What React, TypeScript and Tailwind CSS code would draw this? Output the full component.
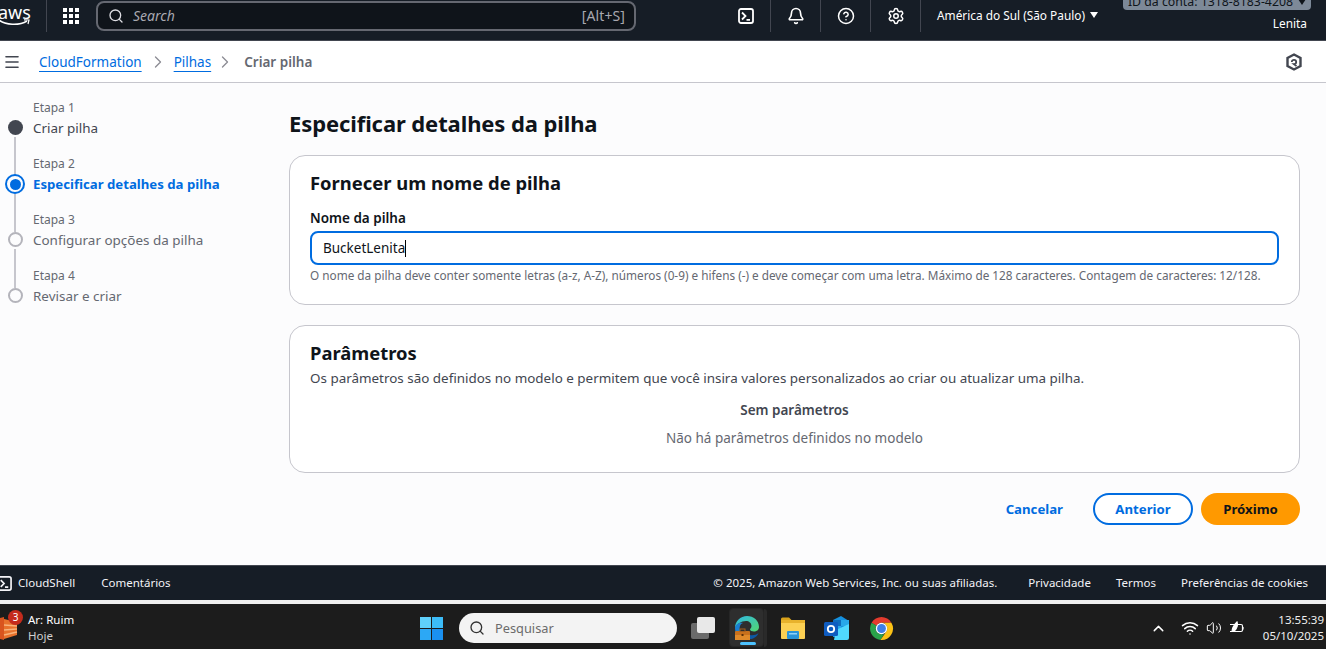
import React from "react";
import { Search, Menu, ChevronRight, Bell, CircleHelp, Settings, ChevronUp, Wifi, Volume2 } from "lucide-react";

const TerminalIcon = ({ size = 16 }: { size?: number }) => (
  <svg width={size} height={size} viewBox="0 0 16 16" fill="none" stroke="currentColor" strokeWidth="1.8">
    <rect x="1" y="1" width="14" height="14" rx="2" />
    <path d="M4 4.500 7.500 8 4 11.500M8.500 11.800h3.500" />
  </svg>
);

const Divider = () => <div className="w-px h-[32px] bg-[#424650]" />;

const Step = ({ n, label, state, last }: { n: number; label: string; state: "done" | "current" | "todo"; last?: boolean }) => (
  <div className="flex h-[56px]">
    <div className="w-[33px] shrink-0 flex flex-col items-center pr-[3px]">
      <div className="h-[18px]" />
      {state === "done" && <div className="w-[15px] h-[15px] mt-[3px] rounded-full bg-[#424650] shrink-0" />}
      {state === "current" && (
        <div className="w-[20px] h-[20px] mt-[1px] -mb-[2px] rounded-full border-2 border-[#006ce0] flex items-center justify-center shrink-0">
          <div className="w-[11px] h-[11px] rounded-full bg-[#006ce0]" />
        </div>
      )}
      {state === "todo" && <div className="w-[15px] h-[15px] mt-[3px] rounded-full border-2 border-[#b4b4bb] shrink-0" />}
      {!last && <div className="w-[2px] flex-1 mt-[2px] -mb-[21px] bg-[#c6c6cd]" />}
    </div>
    <div className="-mt-[1px]">
      <div className="text-[12px] leading-[20px] h-[18px] text-[#656871]">Etapa {n}</div>
      <div
        className={
          "leading-[24px] whitespace-nowrap " +
          (state === "current"
            ? "text-[13.2px] font-bold text-[#006ce0]"
            : state === "done"
            ? "text-[13.45px] text-[#424650]"
            : "text-[13.45px] text-[#656871]")
        }
      >
        {label}
      </div>
    </div>
  </div>
);

const EdgeIcon = () => (
  <svg width="26" height="26" viewBox="0 0 26 26">
    <defs>
      <linearGradient id="eg1" x1="0" y1="0" x2="1" y2="1">
        <stop offset="0" stopColor="#2fb8e6" />
        <stop offset="1" stopColor="#52d86e" />
      </linearGradient>
    </defs>
    <path d="M1 13C1 6 6.500 1 13 1c6.500 0 12 4.500 12 11 0 3-2.500 4.500-5 4.500-2 0-4-1-4-2 0-1 1.500-1.500 1.500-3.500 0-3-2.500-5-5.500-5C7 6 3 9 1 13Z" fill="url(#eg1)" />
    <path d="M1 13c0-3 4-6 8-5-3 1-4 4-3 8 1 4 5 8 10 8-1 .8-2 1-3 1C6 25 1 20 1 13Z" fill="#1a7fd1" />
    <path d="M16 24c3 0 7-2 8.500-6-2 2-6 2.500-8.500 2-2-.4-4-2-5-4 0 4 2 8 5 8Z" fill="#0c59a4" />
    <rect x="1" y="16" width="15" height="9" rx="1" fill="#c8701c" />
    <rect x="1" y="20" width="15" height="5" fill="#e08a2a" />
    <rect x="6" y="14" width="5" height="2.500" fill="none" stroke="#a8601c" strokeWidth="1" />
    <rect x="7.500" y="19" width="2" height="2" fill="#5a2f08" />
  </svg>
);

const FolderIcon = () => (
  <svg width="26" height="24" viewBox="0 0 26 24">
    <path d="M1 3a1.500 1.500 0 0 1 1.500-1.500H9L12 4.500H1Z" fill="#d9a21b" />
    <rect x="1" y="4" width="24" height="19" rx="1" fill="#fcd053" />
    <rect x="1" y="4" width="24" height="3" fill="#e8b22c" />
    <rect x="7" y="15" width="12" height="8" rx="1" fill="#2a94d8" />
    <rect x="9" y="17" width="8" height="1.500" fill="#8fd1f7" />
  </svg>
);

const OutlookIcon = () => (
  <svg width="26" height="24" viewBox="0 0 26 24">
    <path d="M9 4 17 0l8 5v14a2 2 0 0 1-2 2H9Z" fill="#1490df" />
    <path d="M9 4h8v6H9Z" fill="#0f6cbd" />
    <path d="M17 4h8v6h-8Z" fill="#28a8ea" />
    <path d="M9 10h8v6H9Z" fill="#28a8ea" />
    <path d="M12 14l13-6v14a2 2 0 0 1-2 2H10Z" fill="#50d9ff" />
    <rect x="0" y="6" width="14" height="14" rx="1.500" fill="#0f5cc0" />
    <circle cx="7" cy="13" r="3.200" fill="none" stroke="#fff" strokeWidth="1.800" />
  </svg>
);

const ChromeIcon = () => (
  <svg width="25" height="25" viewBox="0 0 48 48">
    <path d="M5 13A22 22 0 0 1 43 13H24A11 11 0 0 0 14.500 18.500Z" fill="#e33b2e" />
    <path d="M5 13A22 22 0 0 0 22 46L29.500 33.500A11 11 0 0 1 14.500 18.500Z" fill="#2aa24a" />
    <path d="M43 13A22 22 0 0 1 22 46L33.500 29.500A11 11 0 0 0 24 13Z" fill="#fbc116" />
    <circle cx="24" cy="24" r="11" fill="#fff" />
    <circle cx="24" cy="24" r="8.500" fill="#3f7fe8" />
  </svg>
);

const AirIcon = () => (
  <svg width="18" height="26" viewBox="0 0 18 26">
    <path d="M0 3 4 2v23L0 24Z" fill="#d9541e" />
    <path d="M4 4 17 7v13L4 24Z" fill="#e8722c" />
    <path d="M4 10 17 11M4 15l13-1M4 20l13-3" stroke="#f8b27a" strokeWidth="1.500" />
  </svg>
);

export default function App() {
  return (
    <div className="w-[1326px] h-[649px] overflow-hidden flex flex-col bg-white font-['Noto_Sans','Open_Sans',sans-serif]">
      {/* Top nav */}
      <header className="h-[41px] shrink-0 bg-[#161d26] border-b border-[#424650] flex items-center text-white overflow-hidden pb-[8px]">
        <div className="w-[47px] shrink-0 h-[32px] flex items-start overflow-hidden border-r border-[#424650]">
          <div className="relative shrink-0 w-[32px] h-[32px] overflow-hidden">
            <span className="absolute -left-[2px] top-[1px] text-[18px] leading-[22px] text-white">aws</span>
            <svg className="absolute left-0 top-[19px]" width="30" height="8" viewBox="0 0 30 8" fill="none">
              <path d="M-1 1c6 5 20 6 28 1" stroke="#fff" strokeWidth="1.500" />
              <path d="M24 .8 29 1l-1 4" stroke="#fff" strokeWidth="1.200" />
            </svg>
          </div>
        </div>
        <div className="ml-[16px] w-[16px] h-[16px] shrink-0 grid grid-cols-3 gap-[2px]">
          {Array.from({ length: 9 }).map((_, i) => (
            <div key={i} className="bg-white w-[4px] h-[4px]" />
          ))}
        </div>
        <div className="ml-[17px] w-[540px] h-[30px] -mt-[1px] shrink-0 rounded-[8px] border-2 border-[#656871] bg-[#0f141a] flex items-center pl-[10px] pr-[9px]">
          <Search size={16} strokeWidth={2} className="text-[#dedee3]" />
          <span className="ml-[9px] text-[14px] italic text-[#a8a8b0]">Search</span>
          <span className="ml-auto text-[14px] tracking-[0.1px] text-[#a8a8b0]">[Alt+S]</span>
        </div>
        <div className="ml-[85px] flex items-center">
          <div className="w-[49px] flex justify-center"><TerminalIcon /></div>
          <Divider />
          <div className="w-[49px] flex justify-center"><Bell size={18} strokeWidth={2.2} /></div>
          <Divider />
          <div className="w-[49px] flex justify-center"><CircleHelp size={18} strokeWidth={2} /></div>
          <Divider />
          <div className="w-[49px] flex justify-center"><Settings size={18} strokeWidth={2} /></div>
          <Divider />
        </div>
        <div className="ml-[16px] text-[11.85px] whitespace-nowrap flex items-center -mt-[1px]">
          América do Sul (São Paulo)
          <span className="ml-[5px] inline-block w-0 h-0 border-x-[4px] border-x-transparent border-t-[6px] border-t-white" />
        </div>
        <div className="ml-auto pr-[15px] flex flex-col items-end self-start text-[11.85px]">
          <div className="-mt-[6px] h-[16px] rounded-[4px] bg-[#7d8998] px-[5px] flex items-center whitespace-nowrap text-[#0f141a] text-[12.3px]">
            ID da conta: 1318-8183-4208
            <span className="ml-[5px] inline-block w-0 h-0 border-x-[4px] border-x-transparent border-t-[6px] border-t-[#0f141a]" />
          </div>
          <div className="mt-[5px] pr-[4px] leading-[17px]">Lenita</div>
        </div>
      </header>

      {/* Breadcrumb */}
      <div className="h-[42px] shrink-0 bg-white border-b border-[#c6c6cd] flex items-center pt-[1px] pl-[3px] pr-[24px]">
        <Menu size={18} strokeWidth={2.2} className="text-[#424650]" />
        <a className="ml-[18px] text-[13.5px] text-[#006ce0] underline underline-offset-[4px] decoration-1">CloudFormation</a>
        <ChevronRight size={20} strokeWidth={1.6} className="ml-[6px] text-[#8c8c94]" />
        <a className="ml-[6px] text-[13.5px] text-[#006ce0] underline underline-offset-[4px] decoration-1">Pilhas</a>
        <ChevronRight size={20} strokeWidth={1.6} className="ml-[4px] text-[#8c8c94]" />
        <span className="ml-[9px] text-[13.5px] font-semibold text-[#656871]">Criar pilha</span>
        <svg className="ml-auto text-[#424650]" width="16" height="18" viewBox="0 0 16 18" fill="none" stroke="currentColor" strokeWidth="2.4">
          <path d="M8 1.500 14.500 5v8L8 16.500 1.500 13V5Z" />
          <path d="M5.800 9a2.200 2.200 0 1 1 2.200 2.200L10.500 13" strokeWidth="1.800" />
        </svg>
      </div>

      {/* Main */}
      <div className="flex-1 min-h-0 bg-[#fcfcfd] flex">
        <nav className="w-[289px] shrink-0 pt-[16px]">
          <Step n={1} label="Criar pilha" state="done" />
          <Step n={2} label="Especificar detalhes da pilha" state="current" />
          <Step n={3} label="Configurar opções da pilha" state="todo" />
          <Step n={4} label="Revisar e criar" state="todo" last />
        </nav>
        <main className="w-[1011px] shrink-0 pt-[23px]">
          <h1 className="text-[22px] leading-[34px] font-bold text-[#0f141a] tracking-[-0.1px]">Especificar detalhes da pilha</h1>
          <section className="mt-[15px] h-[150px] rounded-[16px] border border-[#c6c6cd] bg-white px-[20px] pt-[14px]">
            <h2 className="text-[18.4px] leading-[26px] font-bold text-[#0f141a]">Fornecer um nome de pilha</h2>
            <label className="block mt-[13px] text-[13.5px] leading-[18px] font-semibold text-[#0f141a]">Nome da pilha</label>
            <div className="mt-[4px] h-[34px] rounded-[8px] border-2 border-[#006ce0] bg-white flex items-center pl-[11px] text-[13.5px] text-[#0f141a]">
              BucketLenita<span className="w-px h-[17px] bg-black" />
            </div>
            <p className="mt-[1px] text-[11.78px] leading-[18px] text-[#656871] whitespace-nowrap">
              O nome da pilha deve conter somente letras (a-z, A-Z), números (0-9) e hifens (-) e deve começar com uma letra. Máximo de 128 caracteres. Contagem de caracteres: 12/128.
            </p>
          </section>
          <section className="mt-[20px] h-[148px] rounded-[16px] border border-[#c6c6cd] bg-white px-[20px] pt-[14px]">
            <h2 className="text-[18.4px] leading-[26px] font-bold text-[#0f141a]">Parâmetros</h2>
            <p className="text-[13.43px] leading-[18px] mt-[3px] text-[#424650]">
              Os parâmetros são definidos no modelo e permitem que você insira valores personalizados ao criar ou atualizar uma pilha.
            </p>
            <div className="mt-[14px] text-center text-[13.5px] leading-[18px] font-semibold text-[#424650]">Sem parâmetros</div>
            <div className="mt-[10px] text-center text-[13.5px] leading-[18px] text-[#656871]">Não há parâmetros definidos no modelo</div>
          </section>
          <div className="mt-[20px] flex items-center justify-end gap-[8px]">
            <button className="pr-[22px] pt-[1px] h-[32px] text-[13.2px] font-bold text-[#006ce0]">Cancelar</button>
            <button className="w-[100px] pt-[1px] h-[32px] rounded-full border-2 border-[#006ce0] bg-white text-[13.2px] font-bold text-[#006ce0]">Anterior</button>
            <button className="w-[99px] pt-[1px] h-[32px] rounded-full bg-[#ff9900] text-[13.2px] font-bold text-[#0f141a]">Próximo</button>
          </div>
        </main>
      </div>

      {/* Console footer */}
      <footer className="h-[35px] shrink-0 bg-[#161d26] border-t border-[#424650] flex items-center text-[11.5px] text-[#f3f3f7] whitespace-nowrap">
        <div className="flex items-center -ml-[3px]">
          <TerminalIcon size={15} />
          <span className="ml-[6px]">CloudShell</span>
          <span className="ml-[26px]">Comentários</span>
        </div>
        <div className="ml-auto flex items-center pr-[18px]">
          <span>© 2025, Amazon Web Services, Inc. ou suas afiliadas.</span>
          <span className="ml-[31px]">Privacidade</span>
          <span className="ml-[25px]">Termos</span>
          <span className="ml-[25px]">Preferências de cookies</span>
        </div>
      </footer>
      <div className="h-[4px] shrink-0 bg-[#f0f0f0]" />

      {/* Windows taskbar */}
      <div className="h-[45px] shrink-0 bg-[#1c1c1c] flex items-center text-white pt-[3px]">
        <div className="flex items-center w-[410px] shrink-0 relative">
          <AirIcon />
          <span className="absolute left-[8px] -top-[2px] w-[15px] h-[15px] rounded-full bg-[#c42b1c] text-[10px] leading-[15px] text-center text-white">3</span>
          <div className="ml-[10px] text-[11.5px] leading-[16px]">
            <div>Ar: Ruim</div>
            <div className="text-[#d0d0d0]">Hoje</div>
          </div>
        </div>
        <div className="ml-[10px] w-[23px] h-[23px] grid grid-cols-2 gap-[1px] shrink-0">
          <div className="bg-[#5fd0fa]" />
          <div className="bg-[#3cbcf8]" />
          <div className="bg-[#2ca8f5]" />
          <div className="bg-[#1a90f0]" />
        </div>
        <div className="ml-[16px] w-[218px] h-[30px] rounded-full bg-[#f3f3f3] flex items-center pl-[10px] shrink-0">
          <Search size={16} strokeWidth={2} className="text-[#333]" />
          <span className="ml-[10px] pt-[1px] text-[12.8px] text-[#6b6b6b]">Pesquisar</span>
        </div>
        <div className="ml-[14px] w-[24px] h-[22px] relative shrink-0">
          <div className="absolute left-0 bottom-0 w-[18px] h-[16px] rounded-[2px] bg-[#6a6a6a]" />
          <div className="absolute right-0 top-0 w-[18px] h-[16px] rounded-[2px] bg-[#e8e8e8]" />
        </div>
        <div className="ml-[14px] relative w-[35px] h-[39px] rounded-[4px] bg-[#2e2e2e] border border-[#262626] flex items-center justify-center shrink-0 -mt-[1px]">
          <EdgeIcon />
          <span className="absolute bottom-[1px] left-[10px] w-[16px] h-[3px] rounded-full bg-[#4cc2ff]" />
        </div>
        <div className="w-[3px] h-[38px] bg-[#2a2a2a] rounded-r-[3px] shrink-0" />
        <div className="ml-[13px] shrink-0 flex"><FolderIcon /></div>
        <div className="ml-[18px] shrink-0 flex"><OutlookIcon /></div>
        <div className="ml-[19px] shrink-0 flex"><ChromeIcon /></div>
        <div className="ml-auto flex items-center">
          <ChevronUp size={17} strokeWidth={2} className="text-white" />
          <Wifi size={18} strokeWidth={2} className="ml-[14px] text-white" />
          <Volume2 size={16} strokeWidth={1.5} className="ml-[7px] text-white" />
          <svg className="ml-[7px]" width="17" height="14" viewBox="0 0 17 14" fill="none" stroke="#fff" strokeWidth="1.2">
            <path d="M1 3.500h11a1.500 1.500 0 0 1 1.500 1.500v4A1.500 1.500 0 0 1 12 10.500H1" />
            <path d="M14 6v2.500" />
            <path d="M3 11C3 6 6 3 8 1c1 3 0 7-3 9" fill="#fff" />
          </svg>
          <div className="ml-[17px] pr-[2px] text-right text-[11.5px] leading-[16px] text-[#f0f0f0]">
            <div>13:55:39</div>
            <div>05/10/2025</div>
          </div>
        </div>
      </div>
    </div>
  );
}
